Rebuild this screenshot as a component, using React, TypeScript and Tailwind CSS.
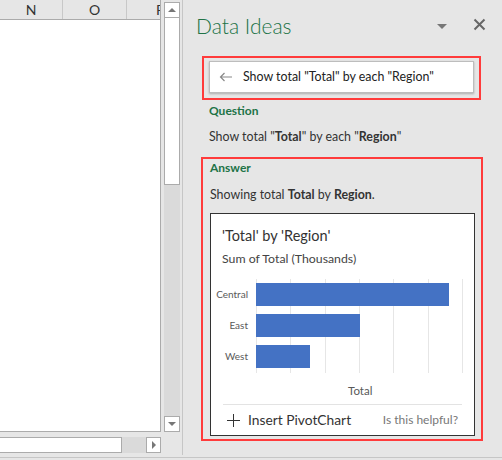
import React from "react";

const font = { fontFamily: 'Lato, "Noto Sans", "Liberation Sans", sans-serif' };

function Bar({ w }: { w: number }) {
  return <div className="h-[23px] bg-[#4472c4]" style={{ width: w }} />;
}

export default function App() {
  return (
    <div className="w-[502px] h-[460px] bg-[#e6e6e6] flex overflow-hidden relative" style={font}>
      {/* Left: spreadsheet */}
      <div className="w-[182px] h-[457px] flex flex-col shrink-0">
        <div className="flex">
          <div className="w-[161px] h-[432px] bg-white border-r border-b border-[#ababab] flex flex-col">
            <div className="h-[20px] bg-[#e6e6e6] border-b border-[#ababab] flex text-[14px] text-[#333] leading-[19px]">
              <div className="w-[63px] border-r border-[#c8c8c8] text-center">N</div>
              <div className="w-[64px] border-r border-[#c8c8c8] text-center">O</div>
              <div className="flex-1 pl-[29px] overflow-hidden whitespace-nowrap">P</div>
            </div>
          </div>
          <div className="ml-[3px] mt-[2px] w-[16px] h-[430px] flex flex-col bg-[#dadada]">
            <div className="h-[16px] bg-white border border-[#ababab] flex items-center justify-center">
              <div className="w-0 h-0 border-l-[4px] border-r-[4px] border-b-[4px] border-l-transparent border-r-transparent border-b-[#777]" />
            </div>
            <div className="h-[167px] bg-white border border-t-0 border-[#ababab]" />
            <div className="flex-1" />
            <div className="h-[16px] bg-white border border-[#ababab] flex items-center justify-center">
              <div className="w-0 h-0 border-l-[4px] border-r-[4px] border-t-[4px] border-l-transparent border-r-transparent border-t-[#777]" />
            </div>
          </div>
        </div>
        <div className="mt-[5px] w-[161px] h-[16px] flex">
          <div className="w-[122px] bg-white border border-l-0 border-[#ababab]" />
          <div className="w-[24px] bg-[#dadada]" />
          <div className="w-[15px] bg-white border border-[#ababab] flex items-center justify-center">
            <div className="w-0 h-0 border-t-[4px] border-b-[4px] border-l-[4px] border-t-transparent border-b-transparent border-l-[#777]" />
          </div>
        </div>
      </div>
      <div className="w-px h-[455px] bg-[#c6c6c6] shrink-0" />

      {/* Right: Data Ideas pane */}
      <div className="flex-1 flex flex-col pl-[13px] pr-[19px]">
        <div className="flex items-center h-[50px] pt-[1px]">
          <div className="text-[21px] font-light text-[#217346] leading-none">Data Ideas</div>
          <div className="flex-1" />
          <div className="w-0 h-0 border-l-[5px] border-r-[5px] border-t-[5px] border-l-transparent border-r-transparent border-t-[#777] mr-[26px] mt-[1px]" />
          <svg width="13" height="13" viewBox="0 0 13 13" className="mr-[-3px] mt-[-3px]">
            <path d="M1.5 1.5 L11.5 11.5 M11.5 1.5 L1.5 11.5" stroke="#666" strokeWidth="2" />
          </svg>
        </div>

        <div className="ml-[6px] w-[279px] h-[44px] border-2 border-[#ff3b3b] mt-[6px] px-[5px] pt-[3px]">
          <div className="h-[32px] bg-white border border-[#bdbdbd] shadow-[0_1px_2px_rgba(0,0,0,0.25)] flex items-center pl-[9px]">
            <svg width="14" height="10" viewBox="0 0 14 10">
              <path d="M13 5 H1.5 M5.5 1 L1.5 5 L5.5 9" stroke="#888" strokeWidth="1.2" fill="none" />
            </svg>
            <span className="ml-[10px] text-[12.4px] text-[#222]">Show total "Total" by each "Region"</span>
          </div>
        </div>

        <div className="ml-[13px] mt-[3px] text-[12px] font-bold text-[#217346] leading-[16px]">Question</div>
        <div className="ml-[13px] mt-[10px] text-[12.4px] text-[#333] leading-[16px]">
          Show total "<b>Total</b>" by each "<b>Region</b>"
        </div>

        <div className="ml-[5px] mt-[12px] w-[282px] h-[284px] border-2 border-[#ff3b3b] px-[7px]">
          <div className="pt-[1px] text-[12px] font-bold text-[#217346] leading-[16px]">Answer</div>
          <div className="mt-[11px] text-[12.4px] text-[#333] leading-[16px]">
            Showing total <span className="font-bold">Total</span> by <span className="font-bold">Region</span>.
          </div>
          <div className="mt-[10px] w-[265px] h-[223px] bg-white border-[1.5px] border-[#333] px-[11px] pt-[13px] flex flex-col">
            <div className="text-[14.5px] text-[#333] leading-[18px]">'Total' by 'Region'</div>
            <div className="mt-[6px] text-[12.3px] text-[#444] leading-[15px]">Sum of Total (Thousands)</div>
            <div className="mt-[13px] flex">
              <div className="w-[26px] flex flex-col items-end text-[10px] text-[#595959] pt-[4px] whitespace-nowrap">
                <div className="h-[31px] leading-[23px]">Central</div>
                <div className="h-[31px] leading-[23px]">East</div>
                <div className="h-[31px] leading-[23px]">West</div>
              </div>
              <div className="ml-[8px] relative w-[209px] h-[94px]">
                <div className="absolute inset-0 flex">
                  {[0, 1, 2, 3, 4, 5].map((i) => (
                    <div key={i} className="w-[34.8px] h-full border-l border-[#e6e6e6]" />
                  ))}
                  <div className="h-full border-l border-[#e6e6e6]" />
                </div>
                <div className="relative flex flex-col gap-[8px] pt-[4px]">
                  <Bar w={193} />
                  <Bar w={104} />
                  <Bar w={54} />
                </div>
              </div>
            </div>
            <div className="mt-[8px] pl-[126px] text-[11.5px] text-[#595959] leading-[14px]">Total</div>
            <div className="mt-[6px] mx-[1px] border-t border-[#e3e3e3]" />
            <div className="flex items-center flex-1">
              <svg width="13" height="13" viewBox="0 0 13 13" className="ml-[5px]">
                <path d="M6.5 0 V13 M0 6.5 H13" stroke="#333" strokeWidth="1" />
              </svg>
              <span className="ml-[8px] text-[13.8px] text-[#333]">Insert PivotChart</span>
              <div className="flex-1" />
              <span className="text-[12px] text-[#777] mr-[5px]">Is this helpful?</span>
            </div>
          </div>
        </div>
      </div>
      <div className="absolute left-0 right-0 top-[457px] h-px bg-[#c6c6c6]" />
    </div>
  );
}
